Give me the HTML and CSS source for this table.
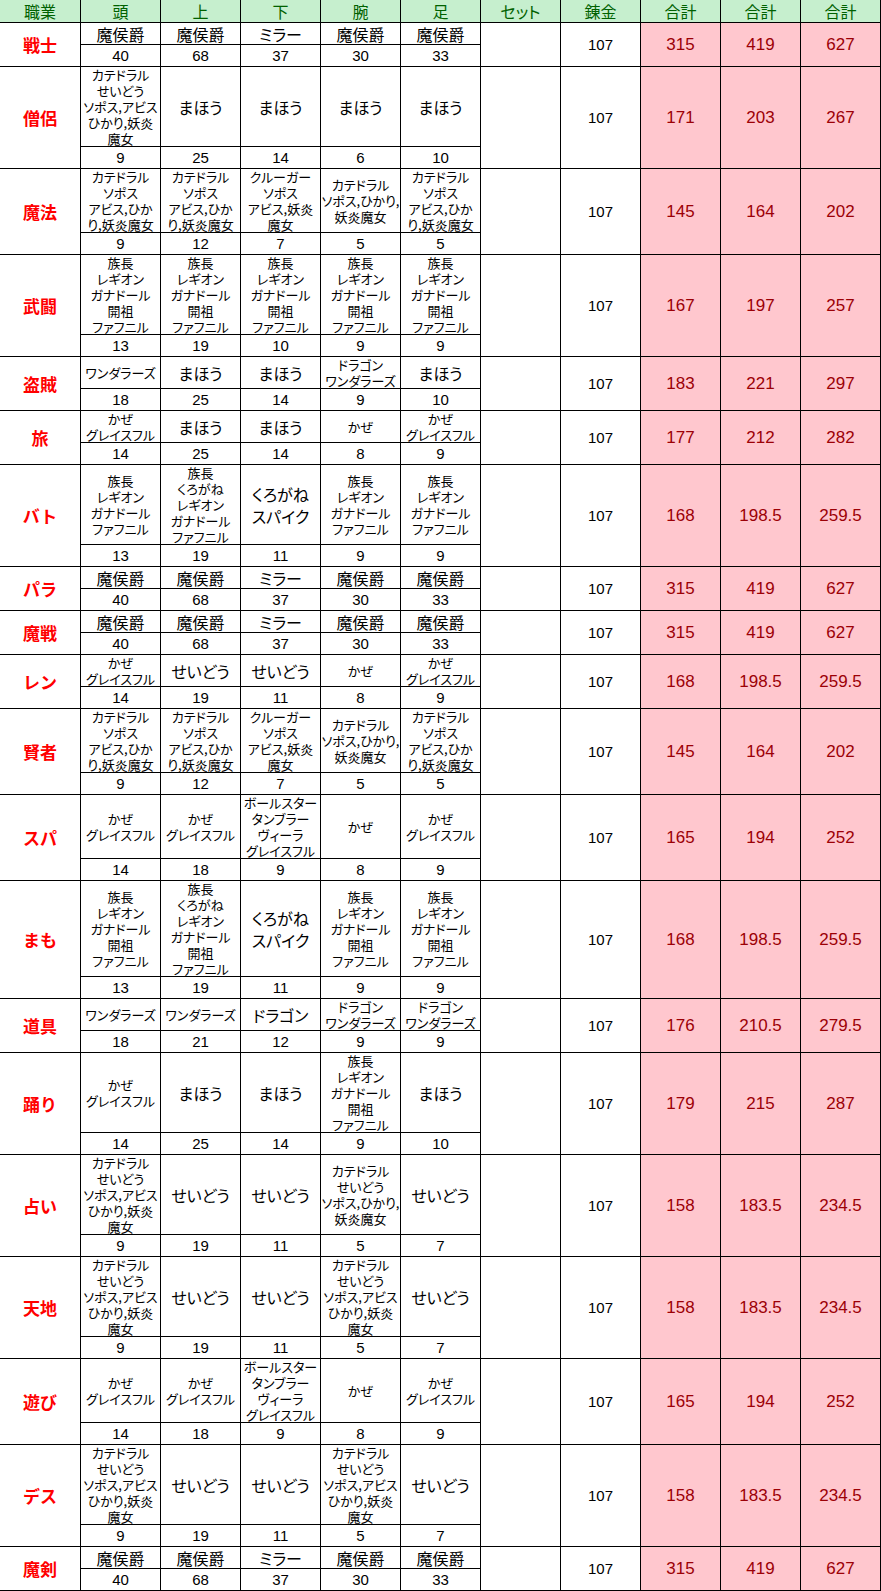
FILE: index.html
```html
<!DOCTYPE html>
<html lang="ja">
<head>
<meta charset="utf-8">
<title>職業別 装備表</title>
<link rel="stylesheet" href="styles.css">
</head>
<body>
<div class="sheet">
  <div class="head">
    <div>職業</div><div>頭</div><div>上</div><div>下</div><div>腕</div><div>足</div><div>セット</div><div>錬金</div><div>合計</div><div>合計</div><div>合計</div>
  </div>

  <div class="job l1">
    <div class="lbl">戦士</div>
    <div class="b">魔侯爵</div><div class="b">魔侯爵</div><div class="b">ミラー</div><div class="b">魔侯爵</div><div class="b">魔侯爵</div>
    <div class="set"></div><div class="alc">107</div><div class="tot">315</div><div class="tot">419</div><div class="tot">627</div>
    <div class="n">40</div><div class="n">68</div><div class="n">37</div><div class="n">30</div><div class="n">33</div>
  </div>

  <div class="job l5">
    <div class="lbl">僧侶</div>
    <div class="s">カテドラル<br>せいどう<br>ソポス,アビス<br>ひかり,妖炎<br>魔女</div><div class="b">まほう</div><div class="b">まほう</div><div class="b">まほう</div><div class="b">まほう</div>
    <div class="set"></div><div class="alc">107</div><div class="tot">171</div><div class="tot">203</div><div class="tot">267</div>
    <div class="n">9</div><div class="n">25</div><div class="n">14</div><div class="n">6</div><div class="n">10</div>
  </div>

  <div class="job l4">
    <div class="lbl">魔法</div>
    <div class="s">カテドラル<br>ソポス<br>アビス,ひか<br>り,妖炎魔女</div><div class="s">カテドラル<br>ソポス<br>アビス,ひか<br>り,妖炎魔女</div><div class="s">クルーガー<br>ソポス<br>アビス,妖炎<br>魔女</div><div class="s">カテドラル<br>ソポス,ひかり,<br>妖炎魔女</div><div class="s">カテドラル<br>ソポス<br>アビス,ひか<br>り,妖炎魔女</div>
    <div class="set"></div><div class="alc">107</div><div class="tot">145</div><div class="tot">164</div><div class="tot">202</div>
    <div class="n">9</div><div class="n">12</div><div class="n">7</div><div class="n">5</div><div class="n">5</div>
  </div>

  <div class="job l5">
    <div class="lbl">武闘</div>
    <div class="s">族長<br>レギオン<br>ガナドール<br>開祖<br>ファフニル</div><div class="s">族長<br>レギオン<br>ガナドール<br>開祖<br>ファフニル</div><div class="s">族長<br>レギオン<br>ガナドール<br>開祖<br>ファフニル</div><div class="s">族長<br>レギオン<br>ガナドール<br>開祖<br>ファフニル</div><div class="s">族長<br>レギオン<br>ガナドール<br>開祖<br>ファフニル</div>
    <div class="set"></div><div class="alc">107</div><div class="tot">167</div><div class="tot">197</div><div class="tot">257</div>
    <div class="n">13</div><div class="n">19</div><div class="n">10</div><div class="n">9</div><div class="n">9</div>
  </div>

  <div class="job l2">
    <div class="lbl">盗賊</div>
    <div class="s">ワンダラーズ</div><div class="b">まほう</div><div class="b">まほう</div><div class="s">ドラゴン<br>ワンダラーズ</div><div class="b">まほう</div>
    <div class="set"></div><div class="alc">107</div><div class="tot">183</div><div class="tot">221</div><div class="tot">297</div>
    <div class="n">18</div><div class="n">25</div><div class="n">14</div><div class="n">9</div><div class="n">10</div>
  </div>

  <div class="job l2">
    <div class="lbl">旅</div>
    <div class="s">かぜ<br>グレイスフル</div><div class="b">まほう</div><div class="b">まほう</div><div class="s">かぜ</div><div class="s">かぜ<br>グレイスフル</div>
    <div class="set"></div><div class="alc">107</div><div class="tot">177</div><div class="tot">212</div><div class="tot">282</div>
    <div class="n">14</div><div class="n">25</div><div class="n">14</div><div class="n">8</div><div class="n">9</div>
  </div>

  <div class="job l5">
    <div class="lbl">バト</div>
    <div class="s">族長<br>レギオン<br>ガナドール<br>ファフニル</div><div class="s">族長<br>くろがね<br>レギオン<br>ガナドール<br>ファフニル</div><div class="b">くろがね<br>スパイク</div><div class="s">族長<br>レギオン<br>ガナドール<br>ファフニル</div><div class="s">族長<br>レギオン<br>ガナドール<br>ファフニル</div>
    <div class="set"></div><div class="alc">107</div><div class="tot">168</div><div class="tot">198.5</div><div class="tot">259.5</div>
    <div class="n">13</div><div class="n">19</div><div class="n">11</div><div class="n">9</div><div class="n">9</div>
  </div>

  <div class="job l1">
    <div class="lbl">パラ</div>
    <div class="b">魔侯爵</div><div class="b">魔侯爵</div><div class="b">ミラー</div><div class="b">魔侯爵</div><div class="b">魔侯爵</div>
    <div class="set"></div><div class="alc">107</div><div class="tot">315</div><div class="tot">419</div><div class="tot">627</div>
    <div class="n">40</div><div class="n">68</div><div class="n">37</div><div class="n">30</div><div class="n">33</div>
  </div>

  <div class="job l1">
    <div class="lbl">魔戦</div>
    <div class="b">魔侯爵</div><div class="b">魔侯爵</div><div class="b">ミラー</div><div class="b">魔侯爵</div><div class="b">魔侯爵</div>
    <div class="set"></div><div class="alc">107</div><div class="tot">315</div><div class="tot">419</div><div class="tot">627</div>
    <div class="n">40</div><div class="n">68</div><div class="n">37</div><div class="n">30</div><div class="n">33</div>
  </div>

  <div class="job l2">
    <div class="lbl">レン</div>
    <div class="s">かぜ<br>グレイスフル</div><div class="b">せいどう</div><div class="b">せいどう</div><div class="s">かぜ</div><div class="s">かぜ<br>グレイスフル</div>
    <div class="set"></div><div class="alc">107</div><div class="tot">168</div><div class="tot">198.5</div><div class="tot">259.5</div>
    <div class="n">14</div><div class="n">19</div><div class="n">11</div><div class="n">8</div><div class="n">9</div>
  </div>

  <div class="job l4">
    <div class="lbl">賢者</div>
    <div class="s">カテドラル<br>ソポス<br>アビス,ひか<br>り,妖炎魔女</div><div class="s">カテドラル<br>ソポス<br>アビス,ひか<br>り,妖炎魔女</div><div class="s">クルーガー<br>ソポス<br>アビス,妖炎<br>魔女</div><div class="s">カテドラル<br>ソポス,ひかり,<br>妖炎魔女</div><div class="s">カテドラル<br>ソポス<br>アビス,ひか<br>り,妖炎魔女</div>
    <div class="set"></div><div class="alc">107</div><div class="tot">145</div><div class="tot">164</div><div class="tot">202</div>
    <div class="n">9</div><div class="n">12</div><div class="n">7</div><div class="n">5</div><div class="n">5</div>
  </div>

  <div class="job l4">
    <div class="lbl">スパ</div>
    <div class="s">かぜ<br>グレイスフル</div><div class="s">かぜ<br>グレイスフル</div><div class="s">ボールスター<br>タンブラー<br>ヴィーラ<br>グレイスフル</div><div class="s">かぜ</div><div class="s">かぜ<br>グレイスフル</div>
    <div class="set"></div><div class="alc">107</div><div class="tot">165</div><div class="tot">194</div><div class="tot">252</div>
    <div class="n">14</div><div class="n">18</div><div class="n">9</div><div class="n">8</div><div class="n">9</div>
  </div>

  <div class="job l6">
    <div class="lbl">まも</div>
    <div class="s">族長<br>レギオン<br>ガナドール<br>開祖<br>ファフニル</div><div class="s">族長<br>くろがね<br>レギオン<br>ガナドール<br>開祖<br>ファフニル</div><div class="b">くろがね<br>スパイク</div><div class="s">族長<br>レギオン<br>ガナドール<br>開祖<br>ファフニル</div><div class="s">族長<br>レギオン<br>ガナドール<br>開祖<br>ファフニル</div>
    <div class="set"></div><div class="alc">107</div><div class="tot">168</div><div class="tot">198.5</div><div class="tot">259.5</div>
    <div class="n">13</div><div class="n">19</div><div class="n">11</div><div class="n">9</div><div class="n">9</div>
  </div>

  <div class="job l2">
    <div class="lbl">道具</div>
    <div class="s">ワンダラーズ</div><div class="s">ワンダラーズ</div><div class="b">ドラゴン</div><div class="s">ドラゴン<br>ワンダラーズ</div><div class="s">ドラゴン<br>ワンダラーズ</div>
    <div class="set"></div><div class="alc">107</div><div class="tot">176</div><div class="tot">210.5</div><div class="tot">279.5</div>
    <div class="n">18</div><div class="n">21</div><div class="n">12</div><div class="n">9</div><div class="n">9</div>
  </div>

  <div class="job l5">
    <div class="lbl">踊り</div>
    <div class="s">かぜ<br>グレイスフル</div><div class="b">まほう</div><div class="b">まほう</div><div class="s">族長<br>レギオン<br>ガナドール<br>開祖<br>ファフニル</div><div class="b">まほう</div>
    <div class="set"></div><div class="alc">107</div><div class="tot">179</div><div class="tot">215</div><div class="tot">287</div>
    <div class="n">14</div><div class="n">25</div><div class="n">14</div><div class="n">9</div><div class="n">10</div>
  </div>

  <div class="job l5">
    <div class="lbl">占い</div>
    <div class="s">カテドラル<br>せいどう<br>ソポス,アビス<br>ひかり,妖炎<br>魔女</div><div class="b">せいどう</div><div class="b">せいどう</div><div class="s">カテドラル<br>せいどう<br>ソポス,ひかり,<br>妖炎魔女</div><div class="b">せいどう</div>
    <div class="set"></div><div class="alc">107</div><div class="tot">158</div><div class="tot">183.5</div><div class="tot">234.5</div>
    <div class="n">9</div><div class="n">19</div><div class="n">11</div><div class="n">5</div><div class="n">7</div>
  </div>

  <div class="job l5">
    <div class="lbl">天地</div>
    <div class="s">カテドラル<br>せいどう<br>ソポス,アビス<br>ひかり,妖炎<br>魔女</div><div class="b">せいどう</div><div class="b">せいどう</div><div class="s">カテドラル<br>せいどう<br>ソポス,アビス<br>ひかり,妖炎<br>魔女</div><div class="b">せいどう</div>
    <div class="set"></div><div class="alc">107</div><div class="tot">158</div><div class="tot">183.5</div><div class="tot">234.5</div>
    <div class="n">9</div><div class="n">19</div><div class="n">11</div><div class="n">5</div><div class="n">7</div>
  </div>

  <div class="job l4">
    <div class="lbl">遊び</div>
    <div class="s">かぜ<br>グレイスフル</div><div class="s">かぜ<br>グレイスフル</div><div class="s">ボールスター<br>タンブラー<br>ヴィーラ<br>グレイスフル</div><div class="s">かぜ</div><div class="s">かぜ<br>グレイスフル</div>
    <div class="set"></div><div class="alc">107</div><div class="tot">165</div><div class="tot">194</div><div class="tot">252</div>
    <div class="n">14</div><div class="n">18</div><div class="n">9</div><div class="n">8</div><div class="n">9</div>
  </div>

  <div class="job l5">
    <div class="lbl">デス</div>
    <div class="s">カテドラル<br>せいどう<br>ソポス,アビス<br>ひかり,妖炎<br>魔女</div><div class="b">せいどう</div><div class="b">せいどう</div><div class="s">カテドラル<br>せいどう<br>ソポス,アビス<br>ひかり,妖炎<br>魔女</div><div class="b">せいどう</div>
    <div class="set"></div><div class="alc">107</div><div class="tot">158</div><div class="tot">183.5</div><div class="tot">234.5</div>
    <div class="n">9</div><div class="n">19</div><div class="n">11</div><div class="n">5</div><div class="n">7</div>
  </div>

  <div class="job l1">
    <div class="lbl">魔剣</div>
    <div class="b">魔侯爵</div><div class="b">魔侯爵</div><div class="b">ミラー</div><div class="b">魔侯爵</div><div class="b">魔侯爵</div>
    <div class="set"></div><div class="alc">107</div><div class="tot">315</div><div class="tot">419</div><div class="tot">627</div>
    <div class="n">40</div><div class="n">68</div><div class="n">37</div><div class="n">30</div><div class="n">33</div>
  </div>
</div>
</body>
</html>
```

FILE: styles.css
```css
html, body {
  margin: 0;
  padding: 0;
  background: #ffffff;
}

.sheet {
  width: 881px;
  font-family: "Noto Sans CJK JP", "Noto Sans", sans-serif;
  color: #000000;
}

.head,
.job {
  display: grid;
  grid-template-columns: 81px repeat(10, 80px);
}

.head {
  grid-template-rows: 23px;
  background: #c6efce;
}

.head > div {
  box-sizing: border-box;
  border-right: 1px solid #000;
  border-bottom: 1px solid #000;
  display: flex;
  align-items: center;
  justify-content: center;
  color: #006100;
  font-size: 16px;
  line-height: 18px;
  font-feature-settings: "palt";
}

.job > div {
  box-sizing: border-box;
  border-right: 1px solid #000;
  border-bottom: 1px solid #000;
  display: flex;
  align-items: center;
  justify-content: center;
  text-align: center;
  white-space: nowrap;
  overflow: visible;
}

.job.l1 { grid-template-rows: 22px 22px; }
.job.l2 { grid-template-rows: 32px 22px; }
.job.l4 { grid-template-rows: 64px 22px; }
.job.l5 { grid-template-rows: 80px 22px; }
.job.l6 { grid-template-rows: 96px 22px; }

.job > .lbl,
.job > .set,
.job > .alc,
.job > .tot {
  grid-row: span 2;
}

.lbl {
  color: #ff0000;
  font-weight: bold;
  font-size: 17px;
  line-height: 20px;
}

.s {
  font-size: 13px;
  line-height: 16px;
  font-feature-settings: "palt";
}

.b {
  font-size: 16px;
  line-height: 22px;
  font-feature-settings: "palt";
}

.n,
.alc {
  font-family: "Liberation Sans", "Noto Sans", sans-serif;
  font-size: 15px;
  line-height: 18px;
}

.tot {
  background: #ffc7ce;
  color: #9c0006;
  font-family: "Liberation Sans", "Noto Sans", sans-serif;
  font-size: 17px;
  line-height: 20px;
}
```
